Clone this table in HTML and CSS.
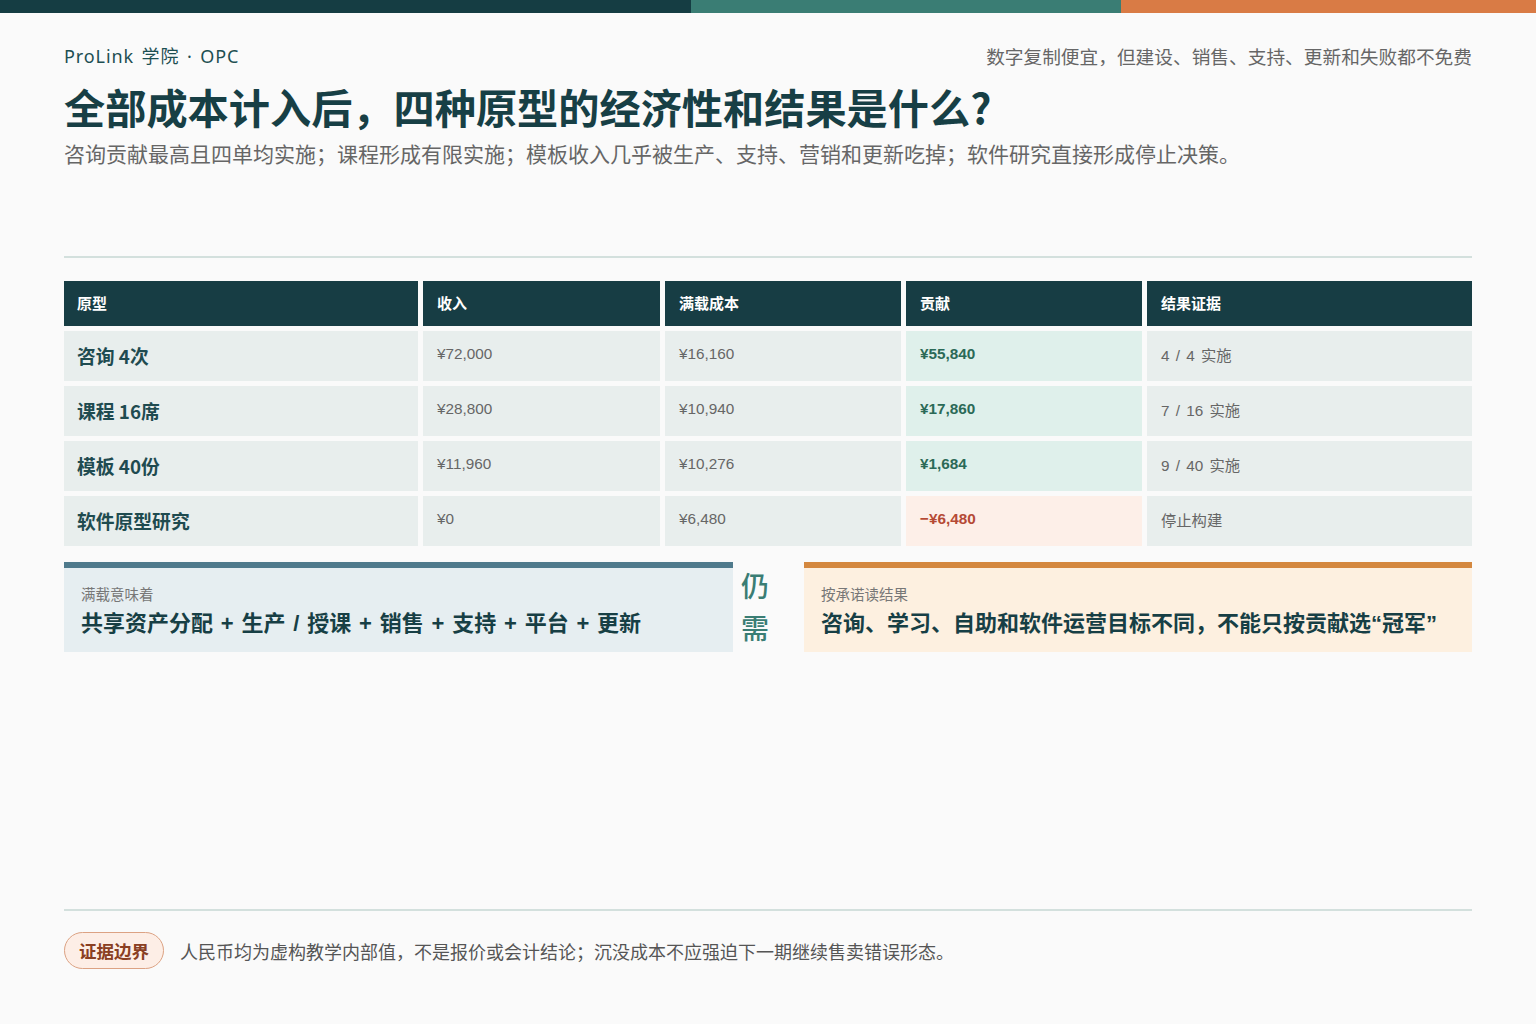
FILE: index.html
```html
<!DOCTYPE html>
<html lang="zh-CN">
<head>
<meta charset="utf-8">
<title>全部成本计入后</title>
<link rel="stylesheet" href="styles.css">
</head>
<body>
<div class="page">
  <div class="topbar">
    <span class="seg seg-dark"></span>
    <span class="seg seg-teal"></span>
    <span class="seg seg-orange"></span>
  </div>
  <main class="main">
    <header class="head">
      <div class="head-row">
        <div class="brand">ProLink 学院 · OPC</div>
        <div class="kicker">数字复制便宜，但建设、销售、支持、更新和失败都不免费</div>
      </div>
      <h1 class="title">全部成本计入后，四种原型的经济性和结果是什么?</h1>
      <p class="subtitle">咨询贡献最高且四单均实施；课程形成有限实施；模板收入几乎被生产、支持、营销和更新吃掉；软件研究直接形成停止决策。</p>
    </header>
    <div class="rule"></div>
    <div class="table">
      <div class="th">原型</div>
      <div class="th">收入</div>
      <div class="th">满载成本</div>
      <div class="th">贡献</div>
      <div class="th">结果证据</div>

      <div class="td name">咨询 4次</div>
      <div class="td">¥72,000</div>
      <div class="td">¥16,160</div>
      <div class="td pos">¥55,840</div>
      <div class="td ev">4 / 4 实施</div>

      <div class="td name">课程 16席</div>
      <div class="td">¥28,800</div>
      <div class="td">¥10,940</div>
      <div class="td pos">¥17,860</div>
      <div class="td ev">7 / 16 实施</div>

      <div class="td name">模板 40份</div>
      <div class="td">¥11,960</div>
      <div class="td">¥10,276</div>
      <div class="td pos">¥1,684</div>
      <div class="td ev">9 / 40 实施</div>

      <div class="td name">软件原型研究</div>
      <div class="td">¥0</div>
      <div class="td">¥6,480</div>
      <div class="td neg">−¥6,480</div>
      <div class="td ev">停止构建</div>
    </div>
    <div class="cards">
      <div class="card card-blue">
        <div class="card-label">满载意味着</div>
        <div class="card-text spaced">共享资产分配 + 生产 / 授课 + 销售 + 支持 + 平台 + 更新</div>
      </div>
      <div class="still">仍需</div>
      <div class="card card-orange">
        <div class="card-label">按承诺读结果</div>
        <div class="card-text">咨询、学习、自助和软件运营目标不同，不能只按贡献选“冠军”</div>
      </div>
    </div>
  </main>
  <footer class="foot">
    <span class="badge">证据边界</span>
    <span class="foot-text">人民币均为虚构教学内部值，不是报价或会计结论；沉没成本不应强迫下一期继续售卖错误形态。</span>
  </footer>
</div>
</body>
</html>
```

FILE: styles.css
```css
* { box-sizing: border-box; }
html, body { margin: 0; padding: 0; }
body {
  background: #fafafa;
  font-family: "Liberation Sans", "Noto Sans CJK SC", sans-serif;
  color: #333;
}
.page {
  width: 1536px;
  height: 1024px;
  display: flex;
  flex-direction: column;
  overflow: hidden;
}
.topbar {
  display: flex;
  height: 13px;
  flex: none;
}
.seg { display: block; height: 100%; }
.seg-dark { width: 691px; background: #153d43; }
.seg-teal { width: 430px; background: #3a7d74; }
.seg-orange { flex: 1; background: #d97b45; }

.main {
  flex: 1;
  padding: 0 64px;
}
.head { padding-top: 30px; }
.head-row {
  display: flex;
  justify-content: space-between;
  align-items: center;
  height: 24px;
}
.brand {
  font-size: 18px;
  color: #1d4f52;
  font-family: "Noto Sans", "Noto Sans CJK SC", sans-serif;
  letter-spacing: 0.9px;
  word-spacing: 2px;
}
.kicker {
  font-size: 18.7px;
  color: #666;
  font-family: "Noto Sans CJK SC", sans-serif;
}
.title {
  margin: 14px 0 0;
  font-size: 41.2px;
  line-height: 50px;
  font-weight: 700;
  color: #173f45;
  font-family: "Noto Sans CJK SC", sans-serif;
}
.subtitle {
  margin: 8px 0 0;
  font-size: 21px;
  line-height: 28px;
  color: #666;
  font-family: "Noto Sans CJK SC", sans-serif;
}
.rule {
  margin-top: 89px;
  height: 2px;
  background: #d3e0dd;
}
.table {
  margin-top: 23px;
  display: grid;
  grid-template-columns: 354fr 237fr 236fr 236fr 325fr;
  grid-auto-rows: 50px;
  grid-template-rows: 45px;
  gap: 5px;
}
.th {
  background: #173d44;
  color: #fff;
  font-size: 15px;
  font-weight: 700;
  font-family: "Noto Sans CJK SC", sans-serif;
  display: flex;
  align-items: center;
  padding: 0 0 2px 14px;
}
.th:first-child { padding-left: 13px; }
.td {
  background: #e8eeed;
  display: flex;
  align-items: center;
  padding: 0 0 4px 14px;
  font-size: 15.3px;
  color: #666;
}
.td.ev { word-spacing: 2px; }
.td.name {
  padding: 0 0 1px 13px;
  font-size: 18.8px;
  font-weight: 700;
  color: #1f4b50;
  font-family: "Noto Sans CJK SC", sans-serif;
}
.td.pos {
  background: #dff0eb;
  color: #2b6a57;
  font-weight: 700;
}
.td.neg {
  background: #fdefe8;
  color: #b54a35;
  font-weight: 700;
}
.cards {
  margin-top: 16px;
  display: grid;
  grid-template-columns: 669px 71px 1fr;
  height: 90px;
}
.card {
  padding: 16px 17px 0;
  border-top: 6px solid;
}
.card-blue { background: #e6eef1; border-top-color: #4f7a8c; }
.card-orange { background: #fdf0e0; border-top-color: #d4883f; }
.card-label {
  font-size: 14.5px;
  color: #777;
  line-height: 20px;
  font-family: "Noto Sans CJK SC", sans-serif;
}
.card-text {
  margin-top: 5px;
  font-size: 22px;
  line-height: 30px;
  font-weight: 700;
  color: #173f45;
  font-family: "Liberation Sans", "Noto Sans CJK SC", sans-serif;
}
.card-text.spaced { word-spacing: 1.7px; }
.still {
  padding: 2px 0 0 8px;
  width: 36px;
  box-sizing: content-box;
  font-size: 28px;
  line-height: 42px;
  font-weight: 500;
  color: #3a7d74;
  font-family: "Noto Sans CJK SC", sans-serif;
  word-break: break-all;
}
.foot {
  flex: none;
  margin: 0 64px;
  border-top: 2px solid #d3e0dd;
  padding: 21px 0 55px;
  display: flex;
  align-items: center;
  gap: 16px;
}
.badge {
  height: 37px;
  padding: 0 14px;
  border: 1px solid #dca283;
  background: #fdeee6;
  border-radius: 19px;
  display: flex;
  align-items: center;
  font-size: 17.5px;
  font-weight: 700;
  color: #8a3f22;
  font-family: "Noto Sans CJK SC", sans-serif;
}
.foot-text {
  font-size: 18px;
  color: #555;
  font-family: "Noto Sans CJK SC", sans-serif;
}
```
